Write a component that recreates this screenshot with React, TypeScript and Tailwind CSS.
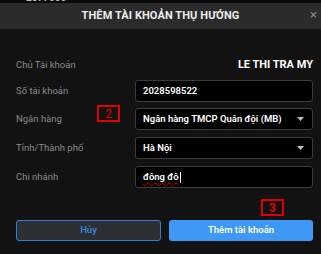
import React from 'react';

const Caret: React.FC = () => (
  <svg width="7" height="4" viewBox="0 0 7 4" className="shrink-0">
    <path d="M0 0h7L3.5 4z" fill="#bdbdbd" />
  </svg>
);

const Row: React.FC<{ label: string; children: React.ReactNode; className?: string }> = ({
  label,
  children,
  className,
}) => (
  <div className={`flex items-center ${className ?? ''}`}>
    <div className="w-[119px] text-[9.5px] text-[#8c8c8c]">{label}</div>
    <div className="flex-1">{children}</div>
  </div>
);

const Field: React.FC<{ children: React.ReactNode }> = ({ children }) => (
  <div className="flex h-[22px] items-center justify-between rounded-[3px] border border-[#3b3b3b] bg-black pl-[7px] pr-[8px] text-[9.5px] font-semibold text-white">
    {children}
  </div>
);

const App: React.FC = () => {
  return (
    <div className="h-[254px] w-[321px] overflow-hidden bg-[#121212] font-['Roboto',sans-serif]">
      <div className="relative h-[3px] overflow-hidden bg-[#0a0a0a]">
        <span className="absolute left-[26px] top-[-8px] text-[10px] leading-[11px] font-bold text-[#bbbbbb]">2877000</span>
      </div>
      <div className="relative flex h-[26px] items-center justify-center bg-[#2b2b2b]">
        <span className="text-[11px] font-bold tracking-[0.1px] text-[#eeeeee]">THÊM TÀI KHOẢN THỤ HƯỚNG</span>
        <span className="absolute right-[4px] top-[5px] text-[13px] leading-[14px] text-[#8a8a8a]">×</span>
      </div>

      <div className="pl-[16px] pr-[8px] pt-[28px]">
        <Row label="Chủ Tài khoản">
          <div className="text-right text-[11px] leading-[16px] font-bold text-white">LE THI TRA MY</div>
        </Row>
        <Row label="Số tài khoản" className="mt-[7px]">
          <Field>2028598522</Field>
        </Row>
        <Row label="Ngân hàng" className="relative mt-[6px]">
          <Field>
            <span>Ngân hàng TMCP Quân đội (MB)</span>
            <Caret />
          </Field>
          <div className="absolute left-[81px] top-[-3px] flex h-[17px] w-[23px] items-center justify-center border-2 border-[#e00000] text-[12px] leading-none text-[#e00000]">
            2
          </div>
        </Row>
        <Row label="Tỉnh/Thành phố" className="mt-[7px]">
          <Field>
            <span>Hà Nội</span>
            <Caret />
          </Field>
        </Row>
        <Row label="Chi nhánh" className="mt-[7px]">
          <Field>
            <span className="flex items-center">
              <span className="underline decoration-wavy decoration-[#e00000] decoration-1 underline-offset-2">đông đô</span>
              <span className="ml-[1px] inline-block h-[11px] w-[1px] bg-white" />
            </span>
          </Field>
        </Row>

        <div className="mt-[11px] flex justify-end pr-[29px]">
          <div className="flex h-[17px] w-[23px] items-center justify-center border-2 border-[#e00000] text-[12px] font-bold leading-none text-[#e00000]">
            3
          </div>
        </div>

        <div className="mt-[4px] flex gap-[8px]">
          <button className="h-[21px] w-[145px] rounded-[3px] border border-[#2f7fd8] bg-[#2c2f33] text-[9.5px] font-semibold text-[#3a86dd]">
            Hủy
          </button>
          <button className="h-[21px] flex-1 rounded-[3px] bg-[#3e98f5] text-[9.5px] font-semibold text-white">
            Thêm tài khoản
          </button>
        </div>
      </div>
    </div>
  );
};

export default App;
